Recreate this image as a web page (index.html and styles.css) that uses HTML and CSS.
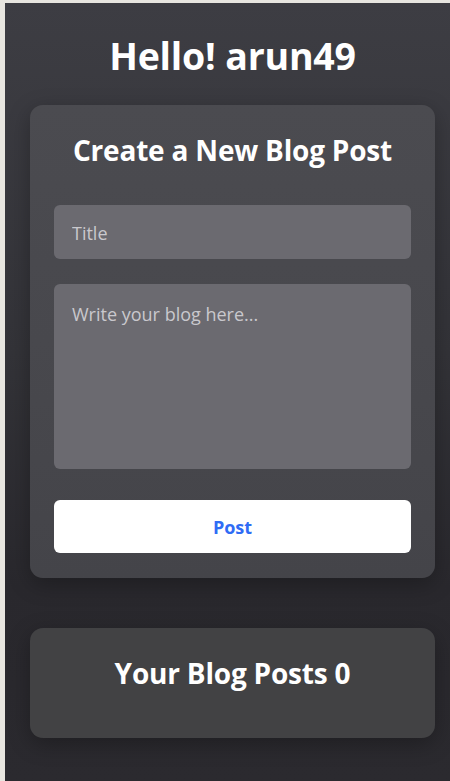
FILE: index.html
```html
<!DOCTYPE html>
<html lang="en">
<head>
<meta charset="utf-8">
<title>Blog</title>
<link rel="stylesheet" href="styles.css">
</head>
<body>
<div class="app">
  <h1 class="greeting">Hello! arun49</h1>
  <section class="card create-card">
    <h2 class="card-title">Create a New Blog Post</h2>
    <form class="post-form">
      <input class="field title-field" type="text" placeholder="Title">
      <textarea class="field body-field" placeholder="Write your blog here..."></textarea>
      <button class="post-btn" type="button">Post</button>
    </form>
  </section>
  <section class="card posts-card">
    <h2 class="card-title posts-title">Your Blog Posts 0</h2>
  </section>
</div>
</body>
</html>
```
FILE: styles.css
```css
html, body {
  margin: 0;
  padding: 0;
  height: 100%;
  overflow: hidden;
  background: #e8e6e0;
}

.app {
  box-sizing: border-box;
  margin: 3px 0 0 5px;
  width: 455px;
  min-height: 778px;
  padding: 30px 25px 40px;
  background: linear-gradient(180deg, #3d3d43 0%, #333338 45%, #29282d 75%, #2b2a2f 100%);
  font-family: "Open Sans", "Noto Sans", sans-serif;
  color: #fff;
}

.greeting {
  margin: 0 0 27px;
  text-align: center;
  font-size: 37.5px;
  line-height: 45px;
  font-weight: 700;
  letter-spacing: -0.2px;
}

.card {
  border-radius: 13px;
  box-shadow: 0 6px 22px rgba(0, 0, 0, 0.28);
}

.create-card {
  padding: 28px 24px 25px;
  background: linear-gradient(180deg, #4b4b50 0%, #48484d 50%, #444449 100%);
}

.card-title {
  margin: 0 0 38px;
  text-align: center;
  font-size: 28px;
  line-height: 34px;
  font-weight: 700;
  letter-spacing: -0.2px;
}

.post-form {
  display: flex;
  flex-direction: column;
}

.field {
  box-sizing: border-box;
  width: 100%;
  border: none;
  outline: none;
  border-radius: 6px;
  background: #6b6a70;
  color: #fff;
  font-family: "Open Sans", "Noto Sans", sans-serif;
  font-size: 18px;
  padding: 0 18px;
}

.field::placeholder {
  color: #c9c8cd;
  opacity: 1;
}

.title-field {
  height: 54px;
  padding-top: 2px;
}

.body-field {
  height: 185px;
  margin-top: 25px;
  padding-top: 18px;
  resize: none;
  line-height: 1.35;
}

.post-btn {
  margin-top: 31px;
  height: 53px;
  border: none;
  border-radius: 6px;
  background: #fff;
  color: #2f6cf5;
  font-family: "Open Sans", "Noto Sans", sans-serif;
  font-size: 18px;
  font-weight: 700;
  padding-top: 2px;
  cursor: pointer;
}

.posts-card {
  margin-top: 50px;
  padding: 28px 24px 48px;
  background: #424244;
}

.posts-title {
  margin: 0;
}
```
